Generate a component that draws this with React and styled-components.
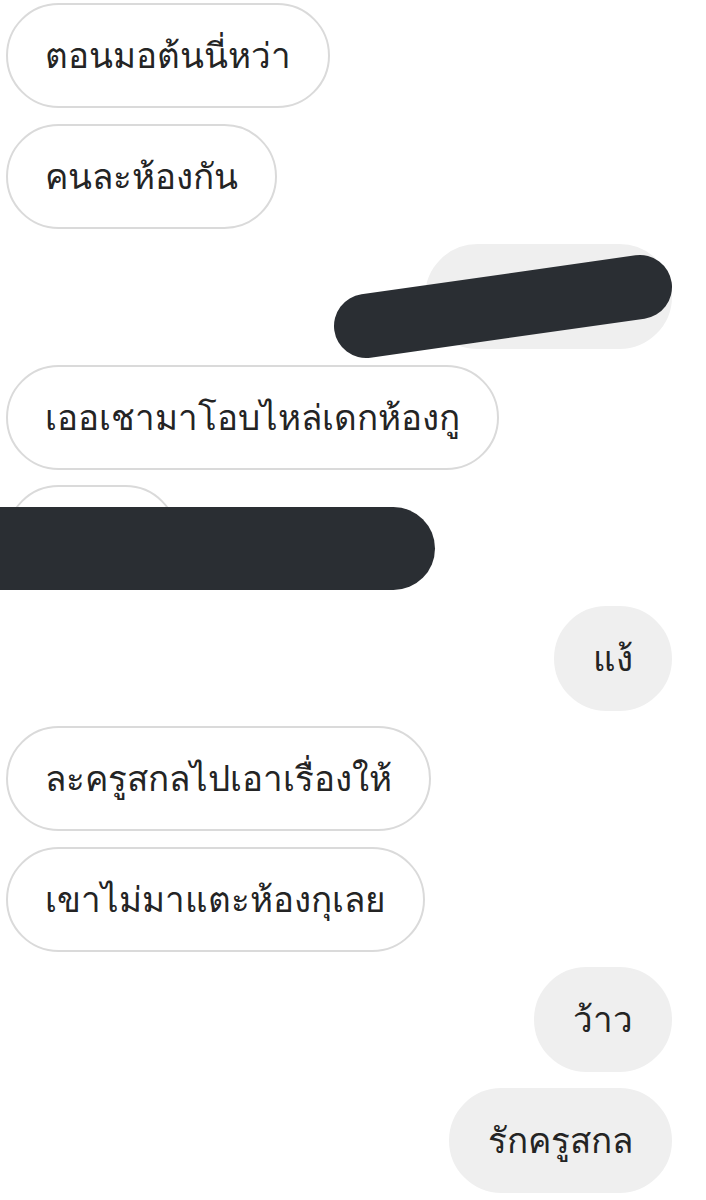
import React from "react";
import styled, { createGlobalStyle } from "styled-components";

const Global = createGlobalStyle`
  html, body { margin: 0; padding: 0; background: #ffffff; }
  body { font-family: "Roboto", sans-serif; }
`;

const Thread = styled.div`
  display: flex;
  flex-direction: column;
  gap: 15.56px;
  padding: 3px 34px 8px 6px;
  width: 706px;
  box-sizing: border-box;
  overflow: hidden;
`;

const Bubble = styled.div`
  position: relative;
  box-sizing: border-box;
  height: 105px;
  display: flex;
  align-items: center;
  padding: 0 37px;
  border-radius: 53px;
  font-family: "Roboto", sans-serif;
  font-size: 35px;
  color: #242424;
  white-space: nowrap;
  align-self: ${(p) => (p.$mine ? "flex-end" : "flex-start")};
  background: ${(p) => (p.$mine ? "#efefef" : "#ffffff")};
  border: 2px solid ${(p) => (p.$mine ? "#efefef" : "#dadada")};
  ${(p) => (p.$w ? `width: ${p.$w}px;` : "")}
`;

const SlashRedaction = styled.svg`
  position: absolute;
  left: -93px;
  top: 7px;
  width: 340px;
  height: 106px;
  overflow: visible;
`;

const BarRedaction = styled.div`
  position: absolute;
  left: -60px;
  top: 20px;
  width: 487px;
  height: 83px;
  border-radius: 41.5px;
  background: #2a2e33;
`;

export default function App() {
  return (
    <>
      <Global />
      <Thread>
        <Bubble>ตอนมอต้นนี่หว่า</Bubble>
        <Bubble>คนละห้องกัน</Bubble>
        <Bubble $mine $w={247}>
          <SlashRedaction viewBox="0 0 340 106">
            <line
              x1="32"
              y1="73"
              x2="306"
              y2="34"
              stroke="#2a2e33"
              strokeWidth="64"
              strokeLinecap="round"
            />
          </SlashRedaction>
        </Bubble>
        <Bubble>เออเชามาโอบไหล่เดกห้องกู</Bubble>
        <Bubble $w={172}>
          <BarRedaction />
        </Bubble>
        <Bubble $mine>แง้</Bubble>
        <Bubble>ละครูสกลไปเอาเรื่องให้</Bubble>
        <Bubble>เขาไม่มาแตะห้องกุเลย</Bubble>
        <Bubble $mine>ว้าว</Bubble>
        <Bubble $mine>รักครูสกล</Bubble>
      </Thread>
    </>
  );
}
